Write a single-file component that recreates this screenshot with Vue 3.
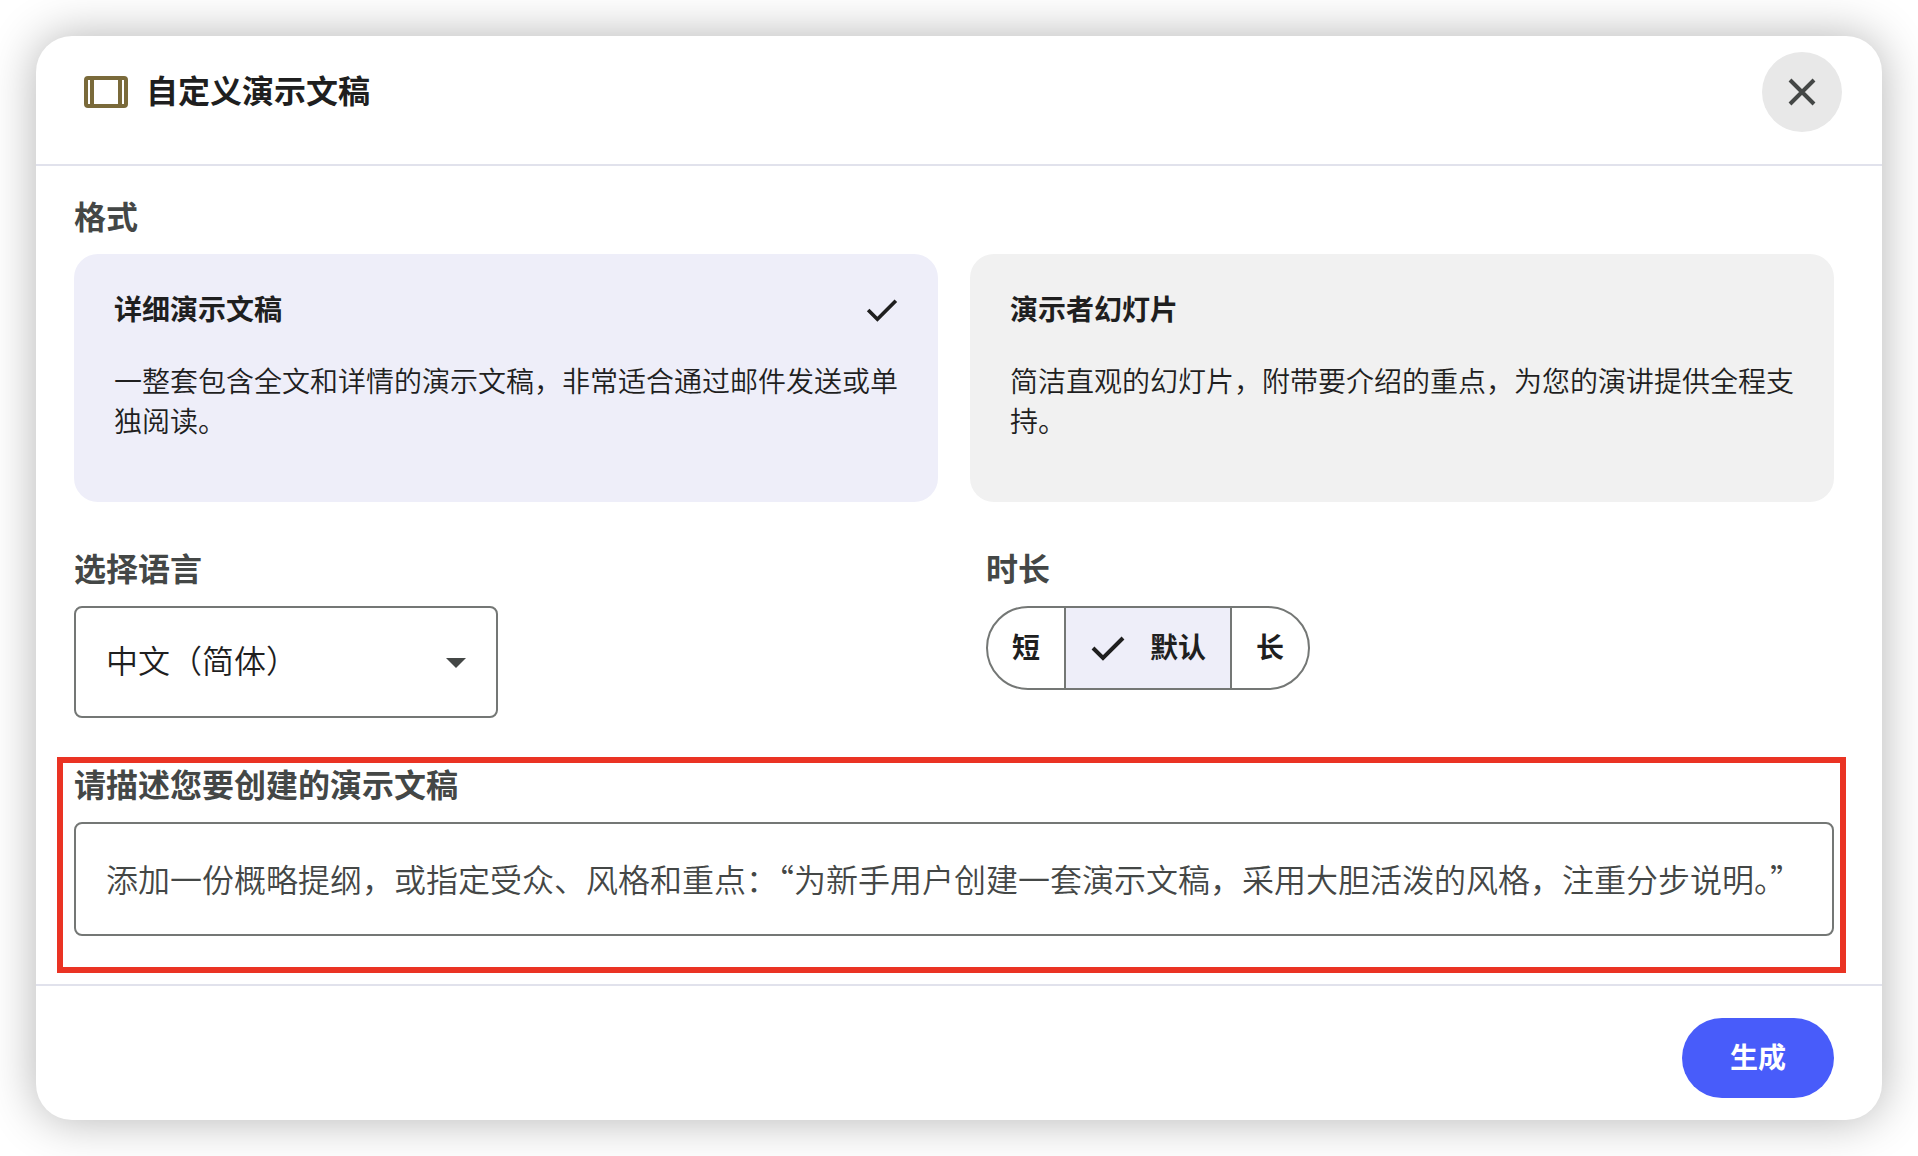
<script setup>
import { ref } from 'vue'

const formats = [
  {
    id: 'detailed',
    title: '详细演示文稿',
    text: '一整套包含全文和详情的演示文稿，非常适合通过邮件发送或单独阅读。',
  },
  {
    id: 'presenter',
    title: '演示者幻灯片',
    text: '简洁直观的幻灯片，附带要介绍的重点，为您的演讲提供全程支持。',
  },
]
const lengths = [
  { id: 'short', label: '短' },
  { id: 'default', label: '默认' },
  { id: 'long', label: '长' },
]

const format = ref('detailed')
const length = ref('default')
const language = ref('zh-CN')
const prompt = ref('')
</script>

<template>
  <main class="stage">
    <section class="dialog" role="dialog" aria-labelledby="dialog-title">
      <header class="head">
        <svg class="deck" viewBox="0 0 44 32" width="44" height="32" aria-hidden="true">
          <rect x="2" y="2" width="40" height="28" rx="2" />
          <path d="M8 2v28M36 2v28" />
        </svg>
        <h1 id="dialog-title">自定义演示文稿</h1>
        <button class="close" type="button" aria-label="关闭">
          <svg viewBox="0 0 28 28" width="28" height="28" aria-hidden="true">
            <path d="M2 2l24 24M26 2L2 26" />
          </svg>
        </button>
      </header>

      <form class="body" @submit.prevent>
        <fieldset class="group">
          <legend class="caption">格式</legend>
          <div class="cards">
            <label
              v-for="item in formats"
              :key="item.id"
              class="card"
              :class="{ chosen: format === item.id }"
            >
              <input v-model="format" class="hidden-input" type="radio" name="format" :value="item.id" />
              <span class="card-top">
                <span class="card-title">{{ item.title }}</span>
                <svg v-if="format === item.id" class="tick" viewBox="0 0 34 26" width="32" height="24" aria-hidden="true">
                  <path d="M2 13l10 10L32 3" />
                </svg>
              </span>
              <span class="card-text">{{ item.text }}</span>
            </label>
          </div>
        </fieldset>

        <div class="options">
          <div class="group">
            <label class="caption" for="language">选择语言</label>
            <div class="select-wrap">
              <select id="language" v-model="language">
                <option value="zh-CN">中文（简体）</option>
              </select>
              <svg class="caret" viewBox="0 0 20 10" width="20" height="10" aria-hidden="true">
                <path d="M0 0h20L10 10z" />
              </svg>
            </div>
          </div>

          <fieldset class="group">
            <legend class="caption">时长</legend>
            <div class="segments">
              <label
                v-for="item in lengths"
                :key="item.id"
                class="segment"
                :class="{ chosen: length === item.id }"
              >
                <input v-model="length" class="hidden-input" type="radio" name="length" :value="item.id" />
                <svg v-if="length === item.id" class="tick" viewBox="0 0 34 26" width="36" height="26" aria-hidden="true">
                  <path d="M2 13l10 10L32 3" />
                </svg>
                <span>{{ item.label }}</span>
              </label>
            </div>
          </fieldset>
        </div>

        <div class="group describe">
          <label class="caption" for="prompt">请描述您要创建的演示文稿</label>
          <textarea
            id="prompt"
            v-model="prompt"
            rows="1"
            placeholder="添加一份概略提纲，或指定受众、风格和重点：“为新手用户创建一套演示文稿，采用大胆活泼的风格，注重分步说明。”"
          ></textarea>
          <span class="highlight" aria-hidden="true"></span>
        </div>
      </form>

      <footer class="foot">
        <button class="submit" type="button">生成</button>
      </footer>
    </section>
  </main>
</template>

<style>
body {
  background: #fff;
}
</style>

<style scoped>
.stage {
  padding: 36px;
  font-family: Inter, "Noto Sans CJK SC", sans-serif;
  font-size: 28px;
  font-weight: 350;
  line-height: 40px;
  color: #1f1f1f;
}
.stage *,
.stage {
  box-sizing: border-box;
}
button,
select,
textarea {
  font: inherit;
  color: inherit;
}
.dialog {
  border-radius: 36px;
  background: #fff;
  box-shadow: 0 0 48px rgba(0, 0, 0, 0.3);
}
.head {
  display: flex;
  align-items: center;
  padding: 16px 40px 32px 48px;
  border-bottom: 2px solid #e1e2ec;
}
.deck {
  fill: none;
  stroke: #7a6a3a;
  stroke-width: 4;
}
h1 {
  flex: 1;
  margin: 0 0 0 18px;
  font-size: 32px;
  font-weight: 700;
}
.close {
  display: grid;
  place-items: center;
  width: 80px;
  height: 80px;
  padding: 0;
  border: 0;
  border-radius: 50%;
  background: #e8e8e8;
}
.close svg {
  fill: none;
  stroke: #444746;
  stroke-width: 4;
}
.body {
  display: flex;
  flex-direction: column;
  gap: 48px;
  padding: 32px 48px 48px 38px;
}
.group {
  min-width: 0;
  margin: 0;
  padding: 0;
  border: 0;
}
.caption {
  display: block;
  padding: 0;
  margin-bottom: 16px;
  font-size: 32px;
  font-weight: 700;
  color: #444746;
}
.cards {
  display: grid;
  grid-template-columns: 1fr 1fr;
  gap: 32px;
}
.card {
  display: flex;
  flex-direction: column;
  gap: 32px;
  min-height: 248px;
  padding: 36px 40px;
  border-radius: 24px;
  background: #f1f1f1;
}
.card.chosen,
.segment.chosen {
  background: #eeeef9;
}
.card-top {
  display: flex;
  align-items: center;
  justify-content: space-between;
}
.card-title {
  font-weight: 700;
}
.hidden-input {
  position: absolute;
  opacity: 0;
  pointer-events: none;
}
.tick {
  fill: none;
  stroke: #1f1f1f;
  stroke-width: 4;
}
.options {
  display: grid;
  grid-template-columns: 1fr 1fr;
  gap: 64px;
}
.select-wrap {
  position: relative;
  width: 424px;
}
select {
  display: block;
  width: 100%;
  height: 112px;
  padding: 0 64px 0 30px;
  border: 2px solid #747775;
  border-radius: 8px;
  background: #fff;
  font-size: 32px;
  appearance: none;
}
.caret {
  position: absolute;
  right: 32px;
  top: 52px;
  fill: #444746;
  pointer-events: none;
}
.segments {
  display: inline-flex;
  height: 84px;
  border: 2px solid #747775;
  border-radius: 42px;
  overflow: hidden;
  vertical-align: top;
}
.segment {
  display: flex;
  align-items: center;
  gap: 24px;
  padding: 0 24px;
  font-weight: 700;
}
.segment + .segment {
  border-left: 2px solid #747775;
}
.describe {
  position: relative;
}
textarea {
  display: block;
  width: 100%;
  height: 114px;
  padding: 34px 30px;
  border: 2px solid #747775;
  border-radius: 8px;
  background: #fff;
  font-family: "Noto Sans CJK SC", sans-serif;
  font-size: 32px;
  line-height: 40px;
  resize: none;
  overflow: hidden;
}
textarea::placeholder {
  color: #444746;
  opacity: 1;
}
.highlight {
  position: absolute;
  inset: -9px -12px -37px -17px;
  border: 6px solid #ea3323;
  pointer-events: none;
}
.foot {
  display: flex;
  justify-content: flex-end;
  padding: 32px 48px 22px;
  border-top: 2px solid #e1e2ec;
}
.submit {
  width: 152px;
  height: 80px;
  padding: 0;
  border: 0;
  border-radius: 40px;
  background: #485cfa;
  color: #fff;
  font-weight: 700;
}
</style>
